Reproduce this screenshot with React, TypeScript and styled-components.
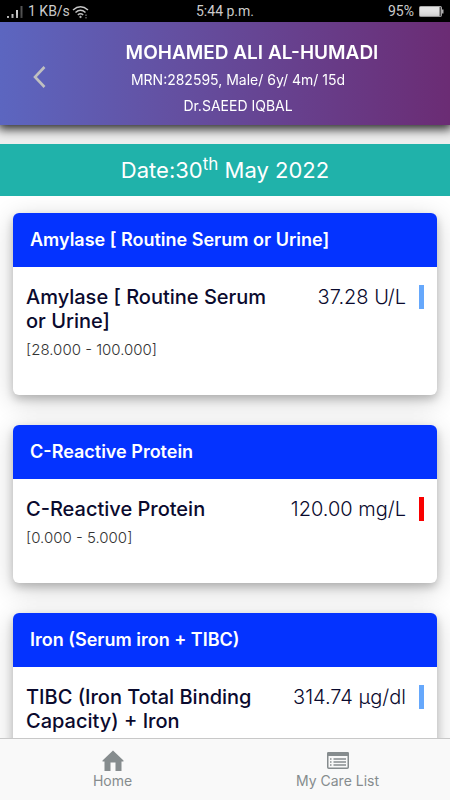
import React from "react";
import styled, { createGlobalStyle } from "styled-components";

const GlobalStyle = createGlobalStyle`
  * { box-sizing: border-box; }
  body {
    margin: 0;
    background: #fff;
    font-family: Inter, "Liberation Sans", sans-serif;
    color: #0a0a2e;
  }
  h1, h2, h3, p { margin: 0; }
`;

const Screen = styled.div`
  display: flex;
  flex-direction: column;
  height: 100vh;
`;

const StatusBar = styled.div`
  flex: none;
  display: grid;
  grid-template-columns: 1fr auto 1fr;
  align-items: center;
  height: 22px;
  padding: 1px 6px 0;
  background: #000;
  color: #d0d0d0;
  font: 14px/21px Roboto, sans-serif;
`;

const StatusGroup = styled.div<{ $end?: boolean }>`
  display: flex;
  align-items: center;
  justify-content: ${({ $end }) => ($end ? "flex-end" : "flex-start")};
  gap: ${({ $end }) => ($end ? "4px" : "2px")};
`;

const Signal = styled.svg`
  margin-right: 2px;
`;

const PatientHeader = styled.header`
  flex: none;
  position: relative;
  z-index: 1;
  display: grid;
  grid-template-columns: 54px 1fr 28px;
  align-items: center;
  height: 103px;
  padding-top: 6px;
  background: linear-gradient(90deg, #5c66c0 0%, #644fa0 40%, #6b2c74 100%);
  box-shadow: 0 2px 10px 2px rgba(0, 0, 0, 0.85);
  color: #fff;
`;

const BackButton = styled.button`
  justify-self: end;
  display: flex;
  padding: 8px;
  border: 0;
  background: none;
  color: #c0c0c0;
`;

const PatientInfo = styled.div`
  display: flex;
  flex-direction: column;
  padding-top: 4px;
  text-align: center;
`;

const PatientName = styled.h1`
  padding-left: 28px;
  font-size: 19px;
  line-height: 28px;
  font-weight: 600;
`;

const PatientLine = styled.p`
  font-size: 14px;
  line-height: 26px;
`;

const Results = styled.main`
  flex: 1;
  min-height: 0;
  overflow-y: auto;
  scrollbar-width: none;
  background: #fff;
`;

const DateSection = styled.div`
  padding-top: 19px;
  background: #eee;
`;

const DateBar = styled.h2`
  height: 52px;
  background: #20b2aa;
  color: #fff;
  font-size: 22px;
  line-height: 52px;
  font-weight: 400;
  text-align: center;

  sup {
    font-size: 17px;
    line-height: 0;
  }
`;

const CardList = styled.div`
  display: flex;
  flex-direction: column;
  gap: 30px;
  padding: 17px 13px 30px;
`;

const Card = styled.section`
  border-radius: 6px;
  background: #fff;
  box-shadow: 0 4px 8px rgba(0, 0, 0, 0.2), 0 6px 26px rgba(0, 0, 0, 0.2);
`;

const CardHeader = styled.h2`
  padding: 0 17px;
  border-radius: 6px 6px 0 0;
  background: #0433ff;
  color: #fff;
  font-size: 18px;
  line-height: 54px;
  font-weight: 600;
`;

const CardBody = styled.div`
  display: grid;
  grid-template-columns: 2fr 1fr 5px;
  column-gap: 13px;
  align-items: start;
  padding: 18px 13px 35px;
`;

const TestName = styled.h3`
  font-size: 20px;
  line-height: 24px;
  font-weight: 500;
`;

const Range = styled.p`
  margin-top: 6px;
  color: #333;
  font-size: 15px;
  line-height: 21px;
  font-weight: 300;
`;

const Value = styled.p`
  font-size: 20px;
  line-height: 24px;
  font-weight: 300;
  text-align: right;
  white-space: nowrap;
`;

const Flag = styled.span<{ $abnormal: boolean }>`
  height: 24px;
  background: ${({ $abnormal }) => ($abnormal ? "#f90000" : "#66a8fc")};
`;

const TabBar = styled.nav`
  flex: none;
  display: grid;
  grid-template-columns: 1fr 1fr;
  height: 62px;
  border-top: 1px solid #c8c8c8;
  background: #f9f9f9;
`;

const Tab = styled.a`
  display: flex;
  flex-direction: column;
  align-items: center;
  gap: 1px;
  padding-top: 11px;
  color: #868c8e;
  font-size: 14px;
  line-height: 18px;
  text-decoration: none;
`;

type Result = {
  panel: string;
  test: string;
  value: string;
  range?: string;
  abnormal: boolean;
};

const results: Result[] = [
  {
    panel: "Amylase [ Routine Serum or Urine]",
    test: "Amylase [ Routine Serum or Urine]",
    value: "37.28 U/L",
    range: "[28.000 - 100.000]",
    abnormal: false,
  },
  {
    panel: "C-Reactive Protein",
    test: "C-Reactive Protein",
    value: "120.00 mg/L",
    range: "[0.000 - 5.000]",
    abnormal: true,
  },
  {
    panel: "Iron (Serum iron + TIBC)",
    test: "TIBC (Iron Total Binding Capacity) + Iron",
    value: "314.74 µg/dl",
    abnormal: false,
  },
];

function SignalIcon() {
  return (
    <Signal width="18" height="14" viewBox="0 0 18 14" aria-hidden="true">
      <path d="M1 11h2v2H1zM5.500 9h2v4h-2zM10 5h2v8h-2z" fill="#d0d0d0" />
      <path d="M14.500 1h2v12h-2z" fill="#555" />
    </Signal>
  );
}

function WifiIcon() {
  return (
    <svg width="18" height="14" viewBox="0 0 18 14" fill="none" stroke="#c8c8c8" strokeWidth="1.500" aria-hidden="true">
      <path d="M1 5Q8.500-1.500 16 5M3.500 7.500Q8.500 3 13.500 7.500M5.800 10Q8.500 7.600 11.200 10" />
      <path d="M8.500 10.500l1.500 1.500-1.500 1.300-1.500-1.300z" fill="#d0d0d0" stroke="none" />
      <path d="M14 9.500v1.500M14 12v1.500" stroke="#777" />
    </svg>
  );
}

function BatteryIcon() {
  return (
    <svg width="26" height="14" viewBox="0 0 26 14" aria-hidden="true">
      <rect x="1.500" y="1.500" width="22" height="10" rx="1" fill="#e4e4e4" stroke="#aaa" />
      <path d="M21.500 2h1.500v9h-1.500z" fill="#555" />
      <path d="M24 4.500h1.500v4H24z" fill="#b0b0b0" />
    </svg>
  );
}

function HomeIcon() {
  return (
    <svg width="22" height="21" viewBox="0 0 22 21" fill="#868c8e" aria-hidden="true">
      <path d="M11 .500L.500 10.500V11.500H2.500V21H8.500v-8.500h5v8.500H19.500V11.500h2v-1z" />
    </svg>
  );
}

function ListIcon() {
  return (
    <svg width="24" height="21" viewBox="0 0 24 21" fill="none" stroke="#868c8e" aria-hidden="true">
      <rect x="1.750" y="2.750" width="20.500" height="15.500" rx="1" strokeWidth="1.500" />
      <path d="M1 6V3.500Q1 2 2.500 2h19Q23 2 23 3.500V6z" fill="#868c8e" stroke="none" />
      <path d="M7.500 9h12.500M7.500 12h12.500M7.500 15h12.500M4 9h1.500M4 12h1.500M4 15h1.500" strokeWidth="1.300" />
    </svg>
  );
}

export default function App() {
  return (
    <Screen>
      <GlobalStyle />
      <StatusBar>
        <StatusGroup>
          <SignalIcon />
          <span>1 KB/s</span>
          <WifiIcon />
        </StatusGroup>
        <span>5:44 p.m.</span>
        <StatusGroup $end>
          <span>95%</span>
          <BatteryIcon />
        </StatusGroup>
      </StatusBar>
      <PatientHeader>
        <BackButton type="button" aria-label="Back">
          <svg width="13" height="22" viewBox="0 0 13 22" fill="none" stroke="currentColor" strokeWidth="2.600" aria-hidden="true">
            <path d="M11.500 1L2 11l9.500 10" />
          </svg>
        </BackButton>
        <PatientInfo>
          <PatientName>MOHAMED ALI AL-HUMADI</PatientName>
          <PatientLine>MRN:282595, Male/ 6y/ 4m/ 15d</PatientLine>
          <PatientLine>Dr.SAEED IQBAL</PatientLine>
        </PatientInfo>
      </PatientHeader>
      <Results>
        <DateSection>
          <DateBar>
            Date:30<sup>th</sup> May 2022
          </DateBar>
        </DateSection>
        <CardList>
          {results.map((result) => (
            <Card key={result.panel}>
              <CardHeader>{result.panel}</CardHeader>
              <CardBody>
                <div>
                  <TestName>{result.test}</TestName>
                  {result.range && <Range>{result.range}</Range>}
                </div>
                <Value>{result.value}</Value>
                <Flag $abnormal={result.abnormal} />
              </CardBody>
            </Card>
          ))}
        </CardList>
      </Results>
      <TabBar>
        <Tab href="#home">
          <HomeIcon />
          Home
        </Tab>
        <Tab href="#care-list">
          <ListIcon />
          My Care List
        </Tab>
      </TabBar>
    </Screen>
  );
}
